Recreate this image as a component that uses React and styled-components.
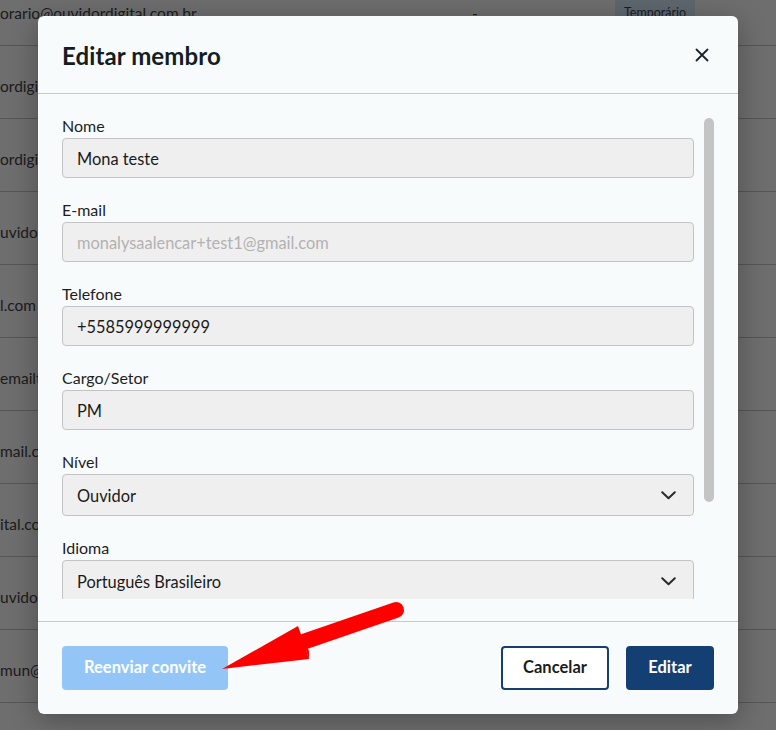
import React from "react";
import styled, { createGlobalStyle } from "styled-components";

const Global = createGlobalStyle`
  html, body { margin: 0; padding: 0; }
  body {
    width: 776px;
    height: 730px;
    overflow: hidden;
    font-family: Lato, "Noto Sans", "Liberation Sans", sans-serif;
    background: #ffffff;
  }
  * { box-sizing: border-box; }
`;

const Page = styled.div`
  position: relative;
  width: 776px;
  height: 730px;
  overflow: hidden;
  background: #ffffff;
`;

const Table = styled.div`
  display: flex;
  flex-direction: column;
  margin-top: -27px;
`;

const Row = styled.div`
  display: grid;
  grid-template-columns: 420px 110px 85px 1fr;
  align-items: center;
  height: 73px;
  border-bottom: 1px solid #c8c8c8;
  color: #444444;
  font-size: 15.5px;
  white-space: nowrap;
`;

const Cell = styled.div`
  padding-top: ${(p) => p.$shift || 0}px;
  text-align: ${(p) => p.$align || "left"};
`;

const Badge = styled.span`
  display: inline-flex;
  align-items: center;
  justify-content: center;
  width: 80px;
  height: 30px;
  padding-top: 7px;
  border-radius: 6px;
  background: #d9eefe;
  color: #3e4650;
  font-size: 12.5px;
`;

const Overlay = styled.div`
  position: absolute;
  inset: 0;
  background: rgba(0, 0, 0, 0.57);
`;

const Modal = styled.div`
  position: absolute;
  left: 38px;
  top: 16px;
  width: 700px;
  height: 698px;
  display: flex;
  flex-direction: column;
  background: #f8fbfc;
  border-radius: 6px;
  box-shadow: 0 6px 28px rgba(0, 0, 0, 0.3);
  overflow: hidden;
`;

const Header = styled.div`
  display: flex;
  align-items: center;
  justify-content: space-between;
  height: 78px;
  padding: 0 29px 0 24px;
  border-bottom: 1px solid #c6c9cb;
  flex: none;
`;

const Title = styled.h2`
  margin: 0;
  padding-top: 2px;
  font-size: 24px;
  font-weight: 700;
  color: #141c24;
  letter-spacing: 0.1px;
`;

const CloseButton = styled.button`
  display: flex;
  border: none;
  background: none;
  padding: 0;
  cursor: pointer;
  color: #1b232c;
`;

const Body = styled.div`
  flex: 1;
  padding: 24px 24px 22px 24px;
  display: flex;
  gap: 10px;
  min-height: 0;
`;

const Scroller = styled.div`
  flex: 1;
  overflow: hidden;
`;

const ScrollTrack = styled.div`
  flex: none;
  width: 10px;
  display: flex;
  flex-direction: column;
`;

const ScrollThumb = styled.div`
  height: 384px;
  border-radius: 5px;
  background: #c4c4c4;
`;

const Form = styled.div`
  display: flex;
  flex-direction: column;
  gap: 24px;
  padding-bottom: 30px;
`;

const Field = styled.label`
  display: flex;
  flex-direction: column;
  gap: 4px;
`;

const Label = styled.span`
  font-size: 16px;
  line-height: 16px;
  color: #1e1e1e;
`;

const InputBox = styled.div`
  display: flex;
  align-items: center;
  justify-content: space-between;
  height: ${(p) => (p.$select ? 42 : 40)}px;
  padding: 0 17px 0 14px;
  background: #efefef;
  border: 1px solid #c3c3c3;
  border-radius: 4px;
  font-size: 16.4px;
  color: ${(p) => (p.$disabled ? "#b2b2b2" : "#1a1a1a")};
  white-space: nowrap;
`;

const Footer = styled.div`
  flex: none;
  display: flex;
  align-items: center;
  justify-content: space-between;
  height: 93px;
  padding: 0 24px;
  border-top: 1px solid #c6c9cb;
`;

const ButtonGroup = styled.div`
  display: flex;
  gap: 17px;
`;

const Button = styled.button`
  height: 44px;
  padding: 0 0 2px;
  border-radius: 4px;
  font-family: inherit;
  font-size: 16.5px;
  line-height: 20px;
  font-weight: 700;
  white-space: nowrap;
  cursor: pointer;
  border: 2px solid
    ${(p) =>
      p.$variant === "outline" ? "#163f70" : p.$variant === "light" ? "#93c6f6" : "#143f73"};
  background: ${(p) =>
    p.$variant === "outline" ? "#ffffff" : p.$variant === "light" ? "#93c6f6" : "#143f73"};
  color: ${(p) => (p.$variant === "outline" ? "#1b1b1b" : "#ffffff")};
  width: ${(p) => p.$w}px;
`;

const Annotation = styled.svg`
  position: absolute;
  left: 0;
  top: 0;
  pointer-events: none;
`;

const rows = [
  { email: "orario@ouvidordigital.com.br", dash: "-", badge: true },
  { email: "ordigital.com.br" },
  { email: "ordigital.com.br" },
  { email: "uvidordigital.com.br" },
  { email: "l.com" },
  { email: "emailteste@gmail.com" },
  { email: "mail.com" },
  { email: "ital.com.br" },
  { email: "uvidordigital.com.br" },
  { email: "mun@gmail.com" },
  { email: "" },
];

const Chevron = () => (
  <svg width="15" height="9" viewBox="0 0 15 9" fill="none">
    <polyline points="1.2,1.2 7.5,7.3 13.8,1.2" stroke="#2b2b2b" strokeWidth="2" strokeLinecap="round" strokeLinejoin="round" />
  </svg>
);

const CloseIcon = () => (
  <svg width="14" height="14" viewBox="0 0 14 14" fill="none">
    <path d="M1.5 1.5 L12.5 12.5 M12.5 1.5 L1.5 12.5" stroke="currentColor" strokeWidth="1.8" strokeLinecap="round" />
  </svg>
);

const fields = [
  { label: "Nome", value: "Mona teste" },
  { label: "E-mail", value: "monalysaalencar+test1@gmail.com", disabled: true },
  { label: "Telefone", value: "+5585999999999" },
  { label: "Cargo/Setor", value: "PM" },
  { label: "Nível", value: "Ouvidor", select: true },
  { label: "Idioma", value: "Português Brasileiro", select: true },
  { label: "Status", value: "Ativo", select: true },
];

export default function App() {
  return (
    <>
      <Global />
      <Page>
        <Table>
          {rows.map((r, i) => (
            <Row key={i}>
              <Cell $shift={7}>{r.email}</Cell>
              <Cell $align="center" $shift={7}>{r.dash || ""}</Cell>
              <Cell />
              <Cell>{r.badge ? <Badge>Temporário</Badge> : null}</Cell>
            </Row>
          ))}
        </Table>
        <Overlay />
        <Modal>
          <Header>
            <Title>Editar membro</Title>
            <CloseButton aria-label="Fechar">
              <CloseIcon />
            </CloseButton>
          </Header>
          <Body>
            <Scroller>
              <Form>
                {fields.map((f) => (
                  <Field key={f.label}>
                    <Label>{f.label}</Label>
                    <InputBox $select={f.select} $disabled={f.disabled}>
                      <span>{f.value}</span>
                      {f.select ? <Chevron /> : null}
                    </InputBox>
                  </Field>
                ))}
              </Form>
            </Scroller>
            <ScrollTrack>
              <ScrollThumb />
            </ScrollTrack>
          </Body>
          <Footer>
            <Button $variant="light" $w={166}>Reenviar convite</Button>
            <ButtonGroup>
              <Button $variant="outline" $w={108}>Cancelar</Button>
              <Button $variant="solid" $w={88}>Editar</Button>
            </ButtonGroup>
          </Footer>
        </Modal>
        <Annotation width="776" height="730" viewBox="0 0 776 730">
          <path d="M303 642 L396 610" stroke="#ff0000" strokeWidth="16" strokeLinecap="round" />
          <polygon points="222,669 298,626 300.5,633 309,659" fill="#ff0000" />
          <polygon points="300,633 309,651 309,659" fill="#ff0000" />
        </Annotation>
      </Page>
    </>
  );
}
